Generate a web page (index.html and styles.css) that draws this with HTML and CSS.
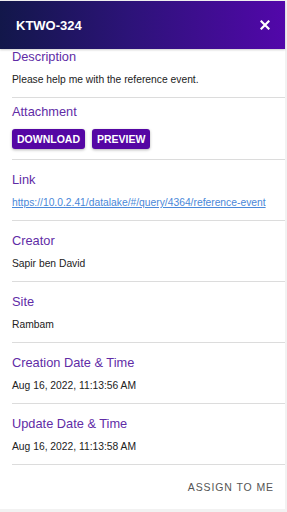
FILE: index.html
```html
<!DOCTYPE html>
<html lang="en">
<head>
  <meta charset="UTF-8">
  <meta name="viewport" content="width=device-width, initial-scale=1.0">
  <title>KTWO-324</title>
  <link rel="stylesheet" href="styles.css">
</head>
<body>
  <div class="dialog">
    <div class="dialog-header">
      <span class="dialog-title">KTWO-324</span>
      <button class="close-btn" aria-label="Close">
        <svg width="10" height="10" viewBox="0 0 10 10">
          <path d="M1.5 1.5 L8.5 8.5 M8.5 1.5 L1.5 8.5" stroke="#fff" stroke-width="2.2" stroke-linecap="square"/>
        </svg>
      </button>
    </div>

    <div class="dialog-body">
      <div class="field field-first">
        <div class="field-label">Description</div>
        <div class="field-value">Please help me with the reference event.</div>
      </div>
      <div class="field field-attachment">
        <div class="field-label">Attachment</div>
        <div class="btn-row">
          <button class="action-btn">Download</button>
          <button class="action-btn">Preview</button>
        </div>
      </div>
      <div class="field">
        <div class="field-label">Link</div>
        <div class="field-value"><a href="#" class="field-link">https://10.0.2.41/datalake/#/query/4364/reference-event</a></div>
      </div>
      <div class="field">
        <div class="field-label">Creator</div>
        <div class="field-value">Sapir ben David</div>
      </div>
      <div class="field">
        <div class="field-label">Site</div>
        <div class="field-value">Rambam</div>
      </div>
      <div class="field">
        <div class="field-label">Creation Date &amp; Time</div>
        <div class="field-value">Aug 16, 2022, 11:13:56 AM</div>
      </div>
      <div class="field">
        <div class="field-label">Update Date &amp; Time</div>
        <div class="field-value">Aug 16, 2022, 11:13:58 AM</div>
      </div>
    </div>

    <div class="dialog-footer">
      <button class="assign-btn">Assign to me</button>
    </div>
  </div>
</body>
</html>
```

FILE: styles.css
```css
body {
  font-family: 'Liberation Sans', Arial, sans-serif;
  background-color: #f2f2f2;
  margin: 0;
  padding: 1px 2px 3px 0;
  height: 512px;
  box-sizing: border-box;
  overflow: hidden;
}

.dialog {
  display: flex;
  flex-direction: column;
  height: 508px;
  background-color: #fff;
}

.dialog-header {
  display: flex;
  align-items: center;
  justify-content: space-between;
  height: 48px;
  padding: 0 12px 0 16px;
  background: linear-gradient(90deg, #12174a 0%, #2c1378 45%, #5207aa 100%);
  box-shadow: 0 1px 2px rgba(0, 0, 0, 0.2);
  flex-shrink: 0;
}

.dialog-title {
  color: #fff;
  font-size: 13px;
  font-weight: bold;
}

.close-btn {
  display: flex;
  align-items: center;
  justify-content: center;
  width: 16px;
  height: 16px;
  padding: 0;
  background: none;
  border: none;
  cursor: pointer;
}

.dialog-body {
  flex: 1;
  overflow: hidden;
  padding-left: 12px;
}

.field {
  padding: 12px 0 10px;
  border-bottom: 1px solid #dcdcdc;
}

.field-first {
  padding-top: 0;
}

.field-attachment {
  padding: 6px 0 10px;
}

.field-label {
  font-size: 12.8px;
  line-height: 16px;
  color: #5f2ca6;
}

.field-value {
  margin-top: 8px;
  font-size: 10.3px;
  line-height: 14px;
  color: #222;
}

.field-link {
  color: #4a88d9;
}

.btn-row {
  display: flex;
  gap: 7px;
  margin-top: 9px;
}

.action-btn {
  height: 20px;
  padding: 0 5px;
  font-family: inherit;
  font-size: 10.5px;
  font-weight: bold;
  text-transform: uppercase;
  color: #fff;
  background-color: #5506a4;
  border: none;
  border-radius: 3px;
  box-shadow: 0 1px 3px rgba(0, 0, 0, 0.3);
  cursor: pointer;
}

.dialog-footer {
  display: flex;
  justify-content: flex-end;
  align-items: center;
  height: 44px;
  padding-right: 11px;
  flex-shrink: 0;
}

.assign-btn {
  padding: 0;
  font-family: inherit;
  font-size: 10.5px;
  letter-spacing: 0.9px;
  text-transform: uppercase;
  color: #555;
  background: none;
  border: none;
  cursor: pointer;
}
```
